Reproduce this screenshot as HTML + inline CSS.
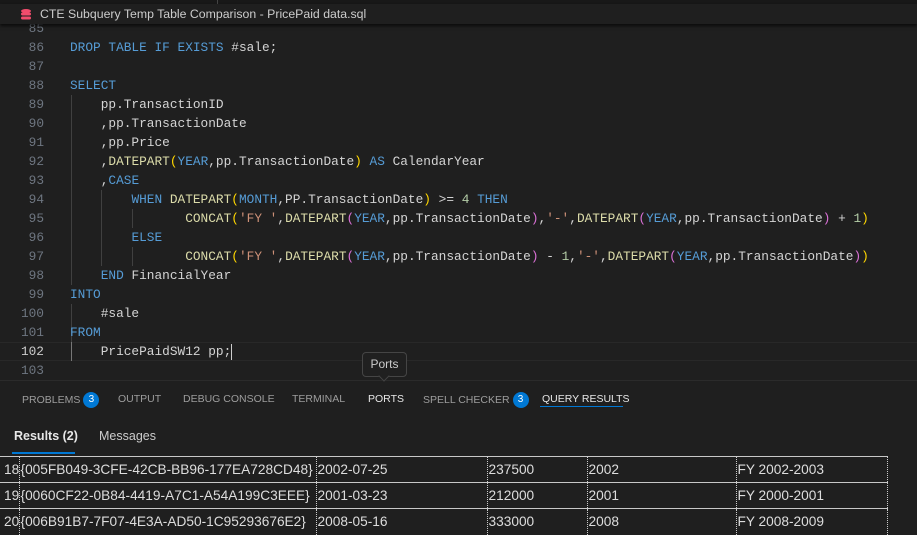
<!DOCTYPE html>
<html><head><meta charset="utf-8"><style>
*{margin:0;padding:0;box-sizing:border-box}
body{width:917px;height:534px;background:#1f1f1f;overflow:hidden;position:relative;font-family:"Liberation Sans",sans-serif;color:#ccc}
.top{position:absolute;left:0;top:0;width:917px;height:4px;background:#181818}
.title{position:absolute;left:0;top:4px;width:917px;height:20px;background:#1f1f1f;box-shadow:0 2px 3px #000a;font-size:12.3px;line-height:20px;color:#ccc;padding-left:40px;z-index:2}
.code{position:absolute;left:0;top:19px;width:917px;font-family:"Liberation Mono",monospace;font-size:12.8px}
.ln{position:absolute;left:0;width:44px;text-align:right;color:#6e7681;height:19px;line-height:19px}
.l{position:absolute;left:70px;white-space:pre;height:19px;line-height:19px;color:#d4d4d4}
.k{color:#569cd6}.f{color:#dcdcaa}.s{color:#ce9178}.n{color:#b5cea8}.p1{color:#ffd700}.p2{color:#da70d6}
.g{position:absolute;width:1px;background:#404040}
.panel{position:absolute;left:0;top:380px;width:917px;height:154px;background:#1f1f1f;border-top:1px solid #2b2b2b}
.tab{position:absolute;top:11px;font-size:10.5px;color:#9d9d9d;line-height:14px;white-space:nowrap}
.badge{display:inline-block;width:16px;height:16px;border-radius:8px;background:#0078d4;color:#fff;font-size:10px;text-align:center;line-height:16px;margin-left:3px;vertical-align:middle}
table{position:absolute;left:0;top:456px;border-collapse:collapse;font-size:13.7px;color:#ddd;table-layout:fixed;width:887px}
td{height:26px;border-top:1px solid #c8c8c8;border-left:1px dotted #ccc;padding-left:1px;white-space:nowrap;overflow:hidden}
td:first-child{border-left:none;padding-left:4px}
</style></head><body>
<div class="top"></div><div style="position:absolute;left:217px;top:0;width:1px;height:4px;background:#444"></div>
<div class="title"><svg style="position:absolute;left:21px;top:5px" width="10" height="11" viewBox="0 0 10 11"><ellipse cx="5" cy="2" rx="5" ry="2" fill="#f14c6c"/><rect x="0" y="3.5" width="10" height="3" rx="1.5" fill="#f14c6c"/><rect x="0" y="7.5" width="10" height="3" rx="1.5" fill="#f14c6c"/></svg>CTE Subquery Temp Table Comparison - PricePaid data.sql</div>
<div class="code">
<div style="position:absolute;left:0;top:323px;width:917px;height:19px;border-top:1px solid #282828;border-bottom:1px solid #282828"></div>
<div class="g" style="left:71px;top:76px;height:190px"></div>
<div class="g" style="left:101px;top:171px;height:76px"></div>
<div class="g" style="left:132px;top:190px;height:19px"></div>
<div class="g" style="left:132px;top:228px;height:19px"></div>
<div class="g" style="left:71px;top:285px;height:38px"></div>
<div class="g" style="left:71px;top:323px;height:19px;background:#777"></div>
<div class="ln" style="top:0">85</div><div class="ln" style="top:19px">86</div><div class="ln" style="top:38px">87</div><div class="ln" style="top:57px">88</div><div class="ln" style="top:76px">89</div><div class="ln" style="top:95px">90</div><div class="ln" style="top:114px">91</div><div class="ln" style="top:133px">92</div><div class="ln" style="top:152px">93</div><div class="ln" style="top:171px">94</div><div class="ln" style="top:190px">95</div><div class="ln" style="top:209px">96</div><div class="ln" style="top:228px">97</div><div class="ln" style="top:247px">98</div><div class="ln" style="top:266px">99</div><div class="ln" style="top:285px">100</div><div class="ln" style="top:304px">101</div><div class="ln" style="top:323px;color:#ccc">102</div><div class="ln" style="top:342px">103</div>
<div class="l" style="top:19px"><span class="k">DROP TABLE IF EXISTS</span> #sale;</div>
<div class="l" style="top:57px"><span class="k">SELECT</span></div>
<div class="l" style="top:76px">    pp.TransactionID</div>
<div class="l" style="top:95px">    ,pp.TransactionDate</div>
<div class="l" style="top:114px">    ,pp.Price</div>
<div class="l" style="top:133px">    ,<span class="f">DATEPART</span><span class="p1">(</span><span class="k">YEAR</span>,pp.TransactionDate<span class="p1">)</span> <span class="k">AS</span> CalendarYear</div>
<div class="l" style="top:152px">    ,<span class="k">CASE</span></div>
<div class="l" style="top:171px">        <span class="k">WHEN</span> <span class="f">DATEPART</span><span class="p1">(</span><span class="k">MONTH</span>,PP.TransactionDate<span class="p1">)</span> &gt;= <span class="n">4</span> <span class="k">THEN</span></div>
<div class="l" style="top:190px">               <span class="f">CONCAT</span><span class="p1">(</span><span class="s">'FY '</span>,<span class="f">DATEPART</span><span class="p2">(</span><span class="k">YEAR</span>,pp.TransactionDate<span class="p2">)</span>,<span class="s">'-'</span>,<span class="f">DATEPART</span><span class="p2">(</span><span class="k">YEAR</span>,pp.TransactionDate<span class="p2">)</span> + <span class="n">1</span><span class="p1">)</span></div>
<div class="l" style="top:209px">        <span class="k">ELSE</span></div>
<div class="l" style="top:228px">               <span class="f">CONCAT</span><span class="p1">(</span><span class="s">'FY '</span>,<span class="f">DATEPART</span><span class="p2">(</span><span class="k">YEAR</span>,pp.TransactionDate<span class="p2">)</span> - <span class="n">1</span>,<span class="s">'-'</span>,<span class="f">DATEPART</span><span class="p2">(</span><span class="k">YEAR</span>,pp.TransactionDate<span class="p2">)</span><span class="p1">)</span></div>
<div class="l" style="top:247px">    <span class="k">END</span> FinancialYear</div>
<div class="l" style="top:266px"><span class="k">INTO</span></div>
<div class="l" style="top:285px">    #sale</div>
<div class="l" style="top:304px"><span class="k">FROM</span></div>
<div class="l" style="top:323px">    PricePaidSW12 pp;<span style="display:inline-block;width:1px;height:16px;background:#ccc;vertical-align:middle"></span></div>
</div>
<div class="panel">
<div class="tab" style="left:22px">PROBLEMS<span class="badge">3</span></div>
<div class="tab" style="left:118px">OUTPUT</div>
<div class="tab" style="left:183px">DEBUG CONSOLE</div>
<div class="tab" style="left:292px">TERMINAL</div>
<div class="tab" style="left:368px;color:#e7e7e7">PORTS</div>
<div class="tab" style="left:423px">SPELL CHECKER<span class="badge">3</span></div>
<div class="tab" style="left:542px;color:#e7e7e7">QUERY RESULTS</div>
<div style="position:absolute;left:540px;top:25px;width:83px;height:1px;background:#0078d4"></div>
<div style="position:absolute;left:14px;top:48px;font-size:12.5px;color:#e7e7e7;font-weight:bold">Results (2)</div>
<div style="position:absolute;left:99px;top:48px;font-size:12.5px;color:#ccc">Messages</div>
<div style="position:absolute;left:12px;top:71px;width:63px;height:2px;background:#0078d4"></div>
</div>
<div style="position:absolute;left:362px;top:352px;width:45px;height:25px;background:#202020;border:1px solid #454545;border-radius:4px;font-size:12px;color:#ccc;text-align:center;line-height:23px;z-index:3">Ports</div>
<div style="position:absolute;left:380px;top:372px;width:8px;height:8px;background:#202020;border-right:1px solid #454545;border-bottom:1px solid #454545;transform:rotate(45deg);z-index:3"></div>
<table>
<colgroup><col style="width:19px"><col style="width:297px"><col style="width:171px"><col style="width:100px"><col style="width:149px"><col style="width:151px"></colgroup>
<tr><td>18</td><td>{005FB049-3CFE-42CB-BB96-177EA728CD48}</td><td>2002-07-25</td><td>237500</td><td>2002</td><td style="border-right:1px dotted #ccc">FY 2002-2003</td></tr>
<tr><td>19</td><td>{0060CF22-0B84-4419-A7C1-A54A199C3EEE}</td><td>2001-03-23</td><td>212000</td><td>2001</td><td style="border-right:1px dotted #ccc">FY 2000-2001</td></tr>
<tr><td>20</td><td>{006B91B7-7F07-4E3A-AD50-1C95293676E2}</td><td>2008-05-16</td><td>333000</td><td>2008</td><td style="border-right:1px dotted #ccc">FY 2008-2009</td></tr>
</table>
</body></html>
